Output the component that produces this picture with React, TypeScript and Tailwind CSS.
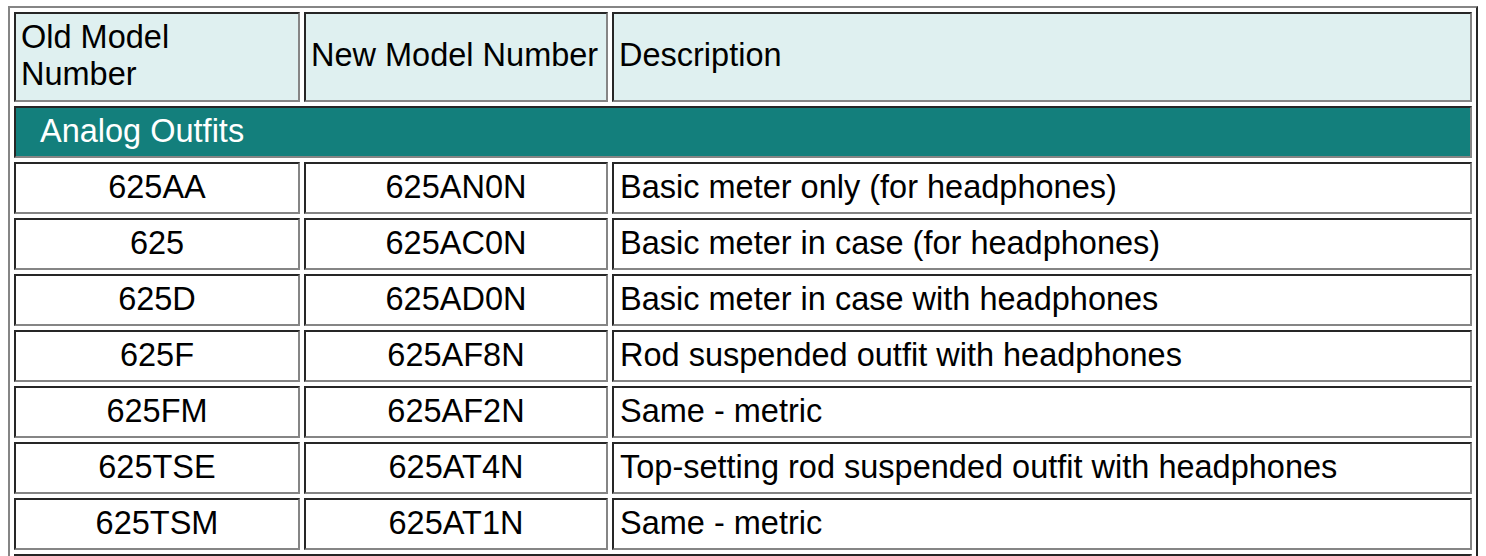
const rows: [string, string, string][] = [
  ["625AA", "625AN0N", "Basic meter only (for headphones)"],
  ["625", "625AC0N", "Basic meter in case (for headphones)"],
  ["625D", "625AD0N", "Basic meter in case with headphones"],
  ["625F", "625AF8N", "Rod suspended outfit with headphones"],
  ["625FM", "625AF2N", "Same - metric"],
  ["625TSE", "625AT4N", "Top-setting rod suspended outfit with headphones"],
  ["625TSM", "625AT1N", "Same - metric"],
];

const cell =
  "border-2 border-t-[#262626] border-l-[#262626] border-r-[#858585] border-b-[#858585] align-middle";

export default function App() {
  return (
    <div className="bg-white pt-[6px] pl-[8px] font-['Liberation_Sans',Arial,sans-serif] text-[32.5px] leading-[1.15] text-black">
      <table className="w-[1470px] table-fixed border-separate border-spacing-[4px] border-2 border-t-[#858585] border-l-[#858585] border-r-[#262626] border-b-[#262626]">
        <thead>
          <tr>
            <th className={`${cell} w-[286px] h-[90px] bg-[#dff0f0] px-[5px] pb-[2px] text-left font-normal`}>
              Old Model
              <br />
              Number
            </th>
            <th className={`${cell} w-[304px] h-[90px] bg-[#dff0f0] px-[5px] pb-[2px] text-left font-normal whitespace-nowrap`}>
              New Model Number
            </th>
            <th className={`${cell} h-[90px] bg-[#dff0f0] px-[5px] pb-[2px] text-left font-normal`}>Description</th>
          </tr>
        </thead>
        <tbody>
          <tr>
            <td colSpan={3} className={`${cell} h-[52px] bg-[#137f7c] pl-[24px] text-white`}>
              Analog Outfits
            </td>
          </tr>
          {rows.map(([oldNo, newNo, desc]) => (
            <tr key={oldNo}>
              <td className={`${cell} h-[52px] px-[5px] text-center`}>{oldNo}</td>
              <td className={`${cell} h-[52px] px-[5px] text-center`}>{newNo}</td>
              <td className={`${cell} h-[52px] px-[6px] text-left`}>{desc}</td>
            </tr>
          ))}
          <tr>
            <td colSpan={3} className={`${cell} h-[52px] bg-[#137f7c] pl-[24px] text-white`}>
              Digital Outfits
            </td>
          </tr>
        </tbody>
      </table>
    </div>
  );
}
